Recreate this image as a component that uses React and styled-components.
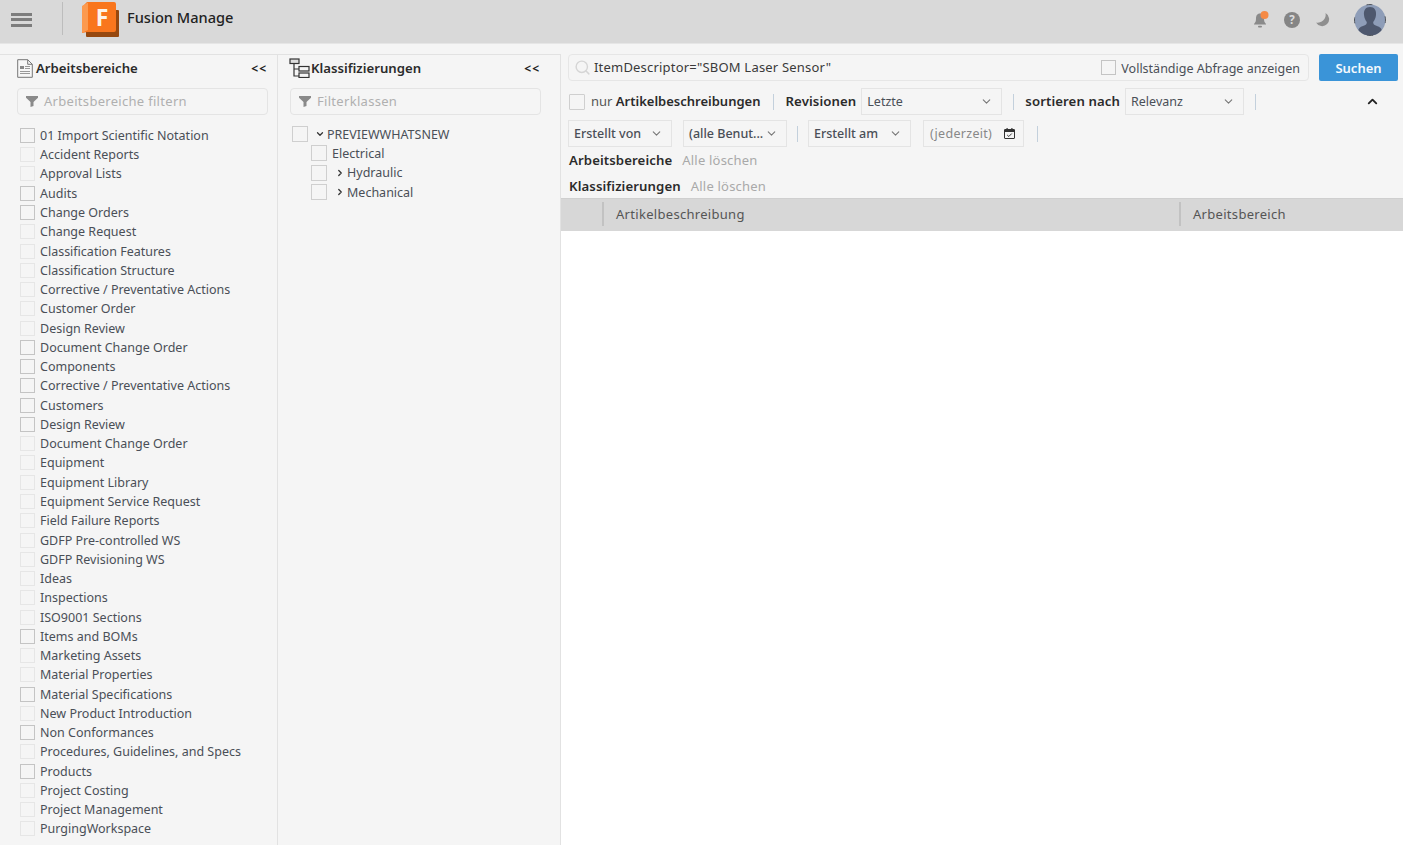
import styled, { createGlobalStyle } from "styled-components";
import { ChevronDown, ChevronRight, ChevronUp, Search } from "lucide-react";

const WORKSPACES = [
    ["01 Import Scientific Notation", true],
    ["Accident Reports"],
    ["Approval Lists"],
    ["Audits", true],
    ["Change Orders", true],
    ["Change Request"],
    ["Classification Features"],
    ["Classification Structure"],
    ["Corrective / Preventative Actions"],
    ["Customer Order"],
    ["Design Review"],
    ["Document Change Order", true],
    ["Components", true],
    ["Corrective / Preventative Actions", true],
    ["Customers", true],
    ["Design Review", true],
    ["Document Change Order"],
    ["Equipment"],
    ["Equipment Library"],
    ["Equipment Service Request"],
    ["Field Failure Reports"],
    ["GDFP Pre-controlled WS"],
    ["GDFP Revisioning WS"],
    ["Ideas"],
    ["Inspections"],
    ["ISO9001 Sections"],
    ["Items and BOMs", true],
    ["Marketing Assets"],
    ["Material Properties"],
    ["Material Specifications", true],
    ["New Product Introduction"],
    ["Non Conformances", true],
    ["Procedures, Guidelines, and Specs"],
    ["Products", true],
    ["Project Costing"],
    ["Project Management"],
    ["PurgingWorkspace"],
]

const GlobalStyle = createGlobalStyle`
    html, body {
        margin: 0;
        height: 100%;
        overflow: hidden;
        background: #f5f5f5;
    }
    * {
        box-sizing: border-box;
    }
    body {
        font-family: "Noto Sans", "Open Sans", sans-serif;
        font-size: 12.5px;
        color: #4a4f57;
    }
`

function FunnelIcon() {
    return (
        <svg width="12" height="11" viewBox="0 0 12 11">
            <path d="M0 0h12v1.8L7.5 6v4L4.5 11V6L0 1.8z" fill="#8a8a8a" />
        </svg>
    )
}

function DocumentIcon() {
    return (
        <svg width="16" height="19" viewBox="0 0 16 19">
            <path d="M.7.7h10l4.6 4.6v13H.7z" fill="#f7f7f7" stroke="#777" />
            <path d="M10.7.7v4.6h4.6" fill="none" stroke="#777" />
            <path d="M3 7h4v3H3z" fill="#888" />
            <path d="M8 7.5h5M8 9.5h5M3 12.5h10M3 14.5h10" stroke="#999" />
        </svg>
    )
}

function TreeIcon() {
    return (
        <svg width="22" height="20" viewBox="0 0 22 20">
            <g fill="none" stroke="#333" strokeWidth="1.2">
                <rect x="1" y="1" width="9" height="4.5" fill="#ddd" />
                <path d="M5 6v12h5M5 11h5" />
                <rect x="10" y="8.5" width="10" height="4.5" />
                <rect x="10" y="15" width="10" height="4.5" />
            </g>
        </svg>
    )
}

function Logo() {
    return (
        <svg width="38" height="36" viewBox="0 0 38 36">
            <rect x="4" y="8" width="33" height="27" rx="1" fill="#96480f" />
            <path d="M5 0h27a2 2 0 0 1 2 2v26a2 2 0 0 1-2 2H5L0 31V5z" fill="#f9761d" />
            <path d="M6 0.5L0 4v27l6-3z" fill="#fc9a4f" />
            <text x="20" y="24" textAnchor="middle" fontFamily="Noto Sans, sans-serif" fontWeight="700" fontSize="23" fill="#fdf3ea">F</text>
        </svg>
    )
}

function BellIcon() {
    return (
        <svg width="16" height="17" viewBox="0 0 16 17">
            <path d="M7 2.5c-3 0-4 2.5-4 5 0 2.5-.5 4-2 5.5v.5h12V13c-1.5-1.5-2-3-2-5.5 0-2.5-1-5-4-5z" fill="#8a8a8a" />
            <rect x="5" y="14.7" width="4" height="1.8" rx=".9" fill="#8a8a8a" />
            <circle cx="11.5" cy="4" r="4" fill="#f58a45" />
        </svg>
    )
}

function HelpIcon() {
    return (
        <svg width="16" height="16" viewBox="0 0 16 16">
            <circle cx="8" cy="8" r="8" fill="#858585" />
            <text x="8" y="12" textAnchor="middle" fontFamily="Noto Sans, sans-serif" fontWeight="700" fontSize="11.5" fill="#dcdcdc">?</text>
        </svg>
    )
}

function MoonIcon() {
    return (
        <svg width="15" height="15" viewBox="0 0 15 15">
            <path d="M10.5 1A7 7 0 1 1 1 10.5A8 8 0 0 0 10.5 1z" fill="#8f8f8f" />
        </svg>
    )
}

function Avatar() {
    return (
        <svg width="32" height="32" viewBox="0 0 32 32">
            <defs>
                <clipPath id="avatar-clip">
                    <circle cx="16" cy="16" r="15.5" />
                </clipPath>
            </defs>
            <g clipPath="url(#avatar-clip)">
                <rect width="32" height="32" fill="#8e9db8" />
                <path d="M16 3c-4.5 0-6.5 3.5-6 8 .3 3 1.5 5.500 2.800 7 .3 2-1 3-3.800 4-3 1-5 2.500-5 6v4h24v-4c0-3.500-2-5-5-6-2.800-1-4.100-2-3.800-4 1.300-1.500 2.500-4 2.800-7 .5-4.500-1.500-8-6-8z" fill="#4e586e" />
            </g>
            <circle cx="16" cy="16" r="15.5" fill="none" stroke="#53575e" strokeDasharray="6 18" strokeDashoffset="3" />
        </svg>
    )
}

function CalendarIcon() {
    return (
        <svg width="11" height="11" viewBox="0 0 11 11">
            <path d="M1 1.5h9a.5.5 0 0 1 .5.5v8a.5.5 0 0 1-.5.5H1a.5.5 0 0 1-.5-.5V2a.5.5 0 0 1 .5-.5z" fill="none" stroke="#333" />
            <path d="M.5 1.5h10V4H.5zM2.5 0h1.2v2H2.5zM7.3 0h1.2v2H7.3z" fill="#333" />
            <path d="M3.2 7l1.6 1.5L7.8 5.5" fill="none" stroke="#333" />
        </svg>
    )
}

function SidePanel({ icon, title, placeholder, tight, children }) {
    return (
        <PanelBox>
            <PanelHead>
                <PanelTitle $tight={tight}>{icon}{title}</PanelTitle>
                <Collapse>&lt;&lt;</Collapse>
            </PanelHead>
            <FilterField>
                <FunnelIcon />
                <span>{placeholder}</span>
            </FilterField>
            {children}
        </PanelBox>
    )
}

function Dropdown({ width, label, bold }) {
    return (
        <SelectBox $width={width} $bold={bold}>
            <span>{label}</span>
            <ChevronDown size={13} color="#777" />
        </SelectBox>
    )
}

export default function App() {
    return (
        <>
            <GlobalStyle />
            <TopBar>
                <Burger><i /><i /><i /></Burger>
                <TopDivider />
                <Brand>
                    <Logo />
                    <span>Fusion Manage</span>
                </Brand>
                <TopIcons>
                    <BellIcon />
                    <HelpIcon />
                    <MoonIcon />
                    <Avatar />
                </TopIcons>
            </TopBar>

            <MainGrid>
                <SidePanel icon={<DocumentIcon />} title="Arbeitsbereiche" placeholder="Arbeitsbereiche filtern">
                    <WorkspaceList>
                        {WORKSPACES.map(([name, dark], i) => (
                            <WorkspaceRow key={i}>
                                <Checkbox $dark={dark} />
                                <span>{name}</span>
                            </WorkspaceRow>
                        ))}
                    </WorkspaceList>
                </SidePanel>

                <SidePanel icon={<TreeIcon />} title="Klassifizierungen" placeholder="Filterklassen" tight>
                    <Tree>
                        <TreeRoot>
                            <TreeCheck />
                            <ChevronDown size={10} color="#333" strokeWidth={3} />
                            <span>PREVIEWWHATSNEW</span>
                        </TreeRoot>
                        <TreeChild>
                            <TreeCheck />
                            <Leaf>Electrical</Leaf>
                        </TreeChild>
                        <TreeChild>
                            <TreeCheck />
                            <ChevronRight size={10} color="#333" strokeWidth={3} />
                            <span>Hydraulic</span>
                        </TreeChild>
                        <TreeChild>
                            <TreeCheck />
                            <ChevronRight size={10} color="#333" strokeWidth={3} />
                            <span>Mechanical</span>
                        </TreeChild>
                    </Tree>
                </SidePanel>

                <Results>
                    <Controls>
                        <SearchRow>
                            <SearchBox>
                                <Search size={17} color="#d5d5d5" />
                                <Query>ItemDescriptor="SBOM Laser Sensor"</Query>
                                <FullQuery>
                                    <Checkbox $dark />
                                    <span>Vollständige Abfrage anzeigen</span>
                                </FullQuery>
                            </SearchBox>
                            <SearchButton>Suchen</SearchButton>
                        </SearchRow>

                        <OptionRow>
                            <BigCheck />
                            <OnlyLabel>nur <b>Artikelbeschreibungen</b></OnlyLabel>
                            <Separator />
                            <StrongLabel>Revisionen</StrongLabel>
                            <Dropdown width={141} label="Letzte" />
                            <Separator $gap={6} />
                            <StrongLabel>sortieren nach</StrongLabel>
                            <Dropdown width={119} label="Relevanz" />
                            <Separator $gap={6} />
                            <ToggleButton><ChevronUp size={15} color="#222" strokeWidth={3} /></ToggleButton>
                        </OptionRow>

                        <FilterRow>
                            <Dropdown width={104} label="Erstellt von" bold />
                            <Dropdown width={104} label="(alle Benut..." bold />
                            <Separator $gap={-1} />
                            <Dropdown width={103} label="Erstellt am" bold />
                            <DateBox>
                                <span>(jederzeit)</span>
                                <CalendarIcon />
                            </DateBox>
                            <Separator $gap={-1} />
                        </FilterRow>

                        <ClearRow>
                            <StrongLabel>Arbeitsbereiche</StrongLabel>
                            <ClearLink>Alle löschen</ClearLink>
                        </ClearRow>
                        <ClearRow>
                            <StrongLabel>Klassifizierungen</StrongLabel>
                            <ClearLink>Alle löschen</ClearLink>
                        </ClearRow>
                    </Controls>

                    <TableHead>
                        <HeadCell $width={41} />
                        <HeadCell $width={577}>Artikelbeschreibung</HeadCell>
                        <HeadCell>Arbeitsbereich</HeadCell>
                    </TableHead>
                    <TableBody />
                </Results>
            </MainGrid>
        </>
    )
}

const TopBar = styled.header`
    height: 44px;
    display: flex;
    align-items: center;
    background: #d9d9d9;
    border-bottom: 1px solid #e6e6e6;
`

const Burger = styled.div`
    width: 21px;
    height: 14px;
    margin: -4px 0 0 11px;
    display: flex;
    flex-direction: column;
    justify-content: space-between;

    i {
        display: block;
        height: 3px;
        background: #7d7d7d;
    }
`

const TopDivider = styled.div`
    width: 1px;
    height: 33px;
    margin: -6px 0 0 30px;
    background: #bdbdbd;
`

const Brand = styled.div`
    margin: -4px 0 0 19px;
    display: flex;
    align-items: flex-start;
    gap: 7px;

    span {
        margin-top: 5px;
        font-size: 14.6px;
        font-weight: 500;
        color: #222;
    }
`

const TopIcons = styled.div`
    margin: -4px 17px 0 auto;
    display: flex;
    align-items: center;
    gap: 15px;

    svg:last-child {
        margin-left: 9px;
    }
`

const MainGrid = styled.main`
    height: 801px;
    margin-top: 10px;
    display: grid;
    grid-template-columns: 278px 283px 1fr;
    overflow: hidden;
`

const PanelBox = styled.section`
    padding: 0 9px 0 17px;
    border-top: 1px solid #e2e2e2;
    border-right: 1px solid #e2e2e2;
    overflow: hidden;

    & + & {
        padding: 0 19px 0 12px;
    }
`

const PanelHead = styled.div`
    height: 28px;
    padding: 0 1px 2px 0;
    display: flex;
    align-items: center;
    justify-content: space-between;
`

const PanelTitle = styled.h2`
    margin: 0 0 0 ${props => props.$tight ? "-1px" : "0"};
    display: flex;
    align-items: center;
    gap: ${props => props.$tight ? "0" : "3px"};
    font-size: 13.2px;
    font-weight: 600;
    color: #2b2b2b;
`

const Collapse = styled.span`
    font-size: 12px;
    font-weight: 700;
    letter-spacing: 1px;
    color: #222;
`

const FilterField = styled.div`
    height: 27px;
    margin: 5px 0 0;
    padding: 0 8px 1px;
    display: flex;
    align-items: center;
    gap: 6px;
    border: 1px solid #e4e4e4;
    border-radius: 4px;
    font-size: 13px;
    letter-spacing: 0.3px;
    color: #b0b0b0;
`

const WorkspaceList = styled.ul`
    margin: 10.8px 0 0 3px;
    padding: 0;
    list-style: none;
`

const WorkspaceRow = styled.li`
    height: 19.28px;
    display: flex;
    align-items: center;
    gap: 5px;
    white-space: nowrap;
`

const Checkbox = styled.span`
    flex: none;
    width: 15px;
    height: 15px;
    border: 1px solid ${props => props.$dark ? "#c4c4c4" : "#e6e6e6"};
`

const TreeCheck = styled(Checkbox)`
    width: 16px;
    height: 16px;
    border-color: #cfcfcf;
`

const Tree = styled.div`
    margin: 9.5px 0 0 2px;
`

const TreeRoot = styled.div`
    height: 19.3px;
    display: flex;
    align-items: center;
    gap: 7px;
    white-space: nowrap;

    svg {
        margin-right: -5px;
    }
`

const TreeChild = styled(TreeRoot)`
    margin-left: 19px;
    gap: 8px;

    svg {
        margin-right: -6px;
    }
`

const Leaf = styled.span`
    margin-left: -3px;
`

const Results = styled.section`
    display: flex;
    flex-direction: column;
    min-width: 0;
`

const Controls = styled.div`
    height: 144px;
    padding: 0 5px 0 7px;
`

const SearchRow = styled.div`
    display: flex;
    gap: 10px;
`

const SearchBox = styled.div`
    flex: none;
    width: 741px;
    height: 27px;
    padding: 0 8px 0 5px;
    display: flex;
    align-items: center;
    gap: 3px;
    border: 1px solid #e6e6e6;
    border-radius: 4px;
`

const Query = styled.span`
    margin-top: -2px;
    font-size: 13px;
    letter-spacing: 0.2px;
    color: #3a3a3a;
`

const FullQuery = styled.label`
    margin-left: auto;
    display: flex;
    align-items: center;
    gap: 5px;
    white-space: nowrap;

    span:last-child {
        margin-top: 2px;
    }
`

const SearchButton = styled.button`
    width: 79px;
    height: 27px;
    padding: 0;
    border: none;
    border-radius: 2px;
    background: #3a94d8;
    color: #f4f9fd;
    font: 600 13px "Noto Sans", sans-serif;
`

const OptionRow = styled.div`
    height: 27px;
    margin-top: 7px;
    display: flex;
    align-items: center;
    gap: 5px;
`

const BigCheck = styled(Checkbox)`
    width: 16px;
    height: 16px;
    margin-left: 1px;
    border-color: #cfcfcf;
    border-radius: 1px;
`

const OnlyLabel = styled.span`
    margin: -1px 0 0 1px;
    white-space: nowrap;
    color: #555;
    font-size: 13px;

    b {
        font-weight: 600;
        color: #2b2b2b;
    }
`

const StrongLabel = styled.span`
    margin-top: -1px;
    font-size: 13.2px;
    font-weight: 600;
    letter-spacing: 0.1px;
    white-space: nowrap;
    color: #2b2b2b;
`

const Separator = styled.span`
    flex: none;
    width: 1px;
    height: 16px;
    margin: 0 ${props => props.$gap ?? 7}px;
    background: #c3d0dc;
`

const SelectBox = styled.div`
    flex: none;
    width: ${props => props.$width}px;
    height: 27px;
    padding: 0 8px 0 5px;
    display: flex;
    align-items: center;
    justify-content: space-between;
    border: 1px solid #e4e4e4;
    white-space: nowrap;
    font-weight: ${props => props.$bold ? 500 : 400};
`

const ToggleButton = styled.span`
    margin-left: auto;
    margin-right: 18px;
    display: flex;
`

const FilterRow = styled.div`
    height: 27px;
    margin-top: 5px;
    display: flex;
    align-items: center;
    gap: 11px;
`

const DateBox = styled.div`
    flex: none;
    width: 101px;
    height: 27px;
    margin: 0 3px 0 1px;
    padding: 0 8px 0 6px;
    display: flex;
    align-items: center;
    justify-content: space-between;
    border: 1px solid #e4e4e4;
    letter-spacing: 0.3px;
    color: #888;
`

const ClearRow = styled.div`
    height: 26px;
    padding-left: 1px;
    display: flex;
    align-items: center;
    gap: 10px;
`

const ClearLink = styled.span`
    font-size: 13px;
    letter-spacing: 0.2px;
    color: #a9a9a9;
`

const TableHead = styled.div`
    height: 33px;
    padding-bottom: 2px;
    display: flex;
    align-items: center;
    background: #d7d7d7;
    border-top: 1px solid #cfcfcf;
    color: #555;
    font-size: 13px;
    letter-spacing: 0.3px;
`

const HeadCell = styled.div`
    flex: ${props => props.$width ? "none" : "1"};
    width: ${props => props.$width ? props.$width + "px" : "auto"};
    height: 24px;
    line-height: 24px;
    padding-left: 12px;

    & + & {
        border-left: 2px solid #c2c2c2;
    }
`

const TableBody = styled.div`
    flex: 1;
    background: #fff;
`
